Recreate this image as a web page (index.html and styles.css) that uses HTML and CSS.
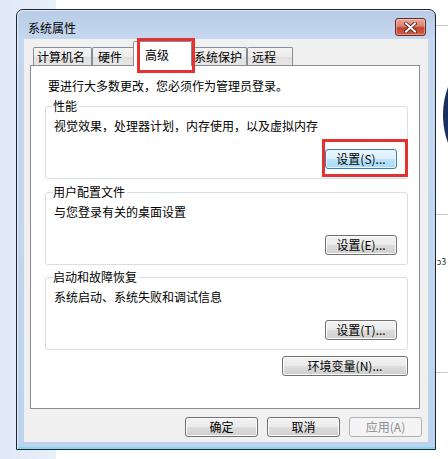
FILE: index.html
```html
<!DOCTYPE html>
<html lang="zh-CN">
<head>
<meta charset="utf-8">
<title>系统属性</title>
<link rel="stylesheet" href="styles.css">
</head>
<body>
<div class="desktop">
  <div class="deco deco-circle"></div>
  <div class="deco deco-line line-a"></div>
  <div class="deco deco-line line-b"></div>
  <div class="deco deco-line line-c"></div>
  <div class="deco deco-text">ɔ3</div>

  <div class="window">
    <div class="titlebar">
      <span class="title">系统属性</span>
      <button class="close" aria-label="关闭">
        <svg width="13" height="11" viewBox="0 0 13 11">
          <path d="M2 1.5 L11 9.5 M11 1.5 L2 9.5" stroke="#4a1b16" stroke-width="3.6" stroke-linecap="square"/>
          <path d="M2 1.5 L11 9.5 M11 1.5 L2 9.5" stroke="#ffffff" stroke-width="2" stroke-linecap="square"/>
        </svg>
      </button>
    </div>
    <div class="client">
      <div class="tabs">
        <div class="tab t1">计算机名</div>
        <div class="tab t2">硬件</div>
        <div class="tab sel">高级<span class="mark mark-tab"></span></div>
        <div class="tab t4">系统保护</div>
        <div class="tab t5">远程</div>
      </div>
      <div class="panel">
        <p class="note">要进行大多数更改，您必须作为管理员登录。</p>
        <fieldset class="group g1">
          <legend>性能</legend>
          <p class="desc">视觉效果，处理器计划，内存使用，以及虚拟内存</p>
          <div class="row"><button class="btn focus">设置(S)...<span class="mark mark-btn"></span></button></div>
        </fieldset>
        <fieldset class="group g2">
          <legend>用户配置文件</legend>
          <p class="desc">与您登录有关的桌面设置</p>
          <div class="row"><button class="btn">设置(E)...</button></div>
        </fieldset>
        <fieldset class="group g3">
          <legend>启动和故障恢复</legend>
          <p class="desc">系统启动、系统失败和调试信息</p>
          <div class="row"><button class="btn">设置(T)...</button></div>
        </fieldset>
        <div class="row env-row"><button class="btn env">环境变量(N)...</button></div>
      </div>
      <div class="footer">
        <button class="btn dlg">确定</button>
        <button class="btn dlg">取消</button>
        <button class="btn dlg disabled" disabled>应用(A)</button>
      </div>
    </div>
  </div>
</div>
</body>
</html>
```
FILE: styles.css
```css
* { box-sizing: border-box; }
html, body {
  margin: 0;
  padding: 0;
  width: 448px;
  height: 459px;
  overflow: hidden;
}
body {
  font-family: "Noto Sans CJK SC", "Noto Sans", sans-serif;
  font-size: 12px;
  color: #000;
  background: linear-gradient(90deg, #dfe9f7 0, #e8eff9 56px, #ffffff 56px);
}
.desktop {
  position: relative;
  width: 448px;
  height: 459px;
  padding: 9px 0 0 16px;
}
.deco { position: absolute; }
.deco-circle {
  left: 440px;
  top: 84px;
  width: 8px;
  height: 62px;
  background: radial-gradient(circle at 84px 31px, #1c2f63 0, #1c2f63 80.5px, rgba(28, 47, 99, 0) 81.5px);
}
.deco-line { left: 436px; width: 12px; height: 1px; background: #c9c9c9; }
.line-a { top: 25px; }
.line-b { top: 214px; }
.line-c { top: 372px; }
.deco-text {
  left: 437px;
  top: 256px;
  width: 11px;
  overflow: hidden;
  font-size: 9px;
  line-height: 12px;
  color: #333;
  white-space: nowrap;
}

.window {
  position: relative;
  width: 420px;
  height: 441px;
  border: 1px solid #1d2733;
  border-radius: 7px 7px 0 0;
  padding: 0 7px 0 7px;
  background: linear-gradient(180deg, #b8cce6 0, #c6d8ef 30px, #c2d6ee 60%, #bdd3ed calc(100% - 2px), #84d7f2 calc(100% - 2px));
  box-shadow: inset 1px 1px 0 #e4eefa;
}
.titlebar {
  height: 29px;
  display: flex;
  align-items: flex-start;
  justify-content: space-between;
}
.title {
  margin: 10px 0 0 4px;
  line-height: 16px;
  color: #000;
}
.close {
  margin: 8px 2px 0 0;
  width: 31px;
  height: 18px;
  padding: 0;
  border: 1px solid #6a2a22;
  border-radius: 3px;
  background: linear-gradient(180deg, #e8aa9c 0, #d98170 45%, #c3442f 55%, #d0604a 100%);
  box-shadow: inset 0 0 0 1px rgba(255, 220, 210, 0.45);
  display: flex;
  align-items: center;
  justify-content: center;
}
.close svg { display: block; }

.client {
  height: 403px;
  background: #f0f0f0;
  padding: 8px 0 0 6px;
}
.tabs {
  display: flex;
  align-items: flex-end;
  height: 18px;
  padding-left: 3px;
}
.tab {
  height: 18px;
  line-height: 16px;
  padding-top: 1px;
  border: 1px solid #898c95;
  border-bottom: none;
  border-radius: 2px 2px 0 0;
  background: linear-gradient(180deg, #f4f4f4 0, #ececec 50%, #dfdfdf 50%, #e6e6e6 100%);
  white-space: nowrap;
}
.t1 { width: 59px; padding-left: 3px; }
.t2 { width: 43px; padding-left: 5px; }
.sel {
  position: relative;
  z-index: 2;
  width: 59px;
  height: 25px;
  margin: 0 -2px -1px -2px;
  padding-left: 11px;
  padding-top: 5px;
  background: #ffffff;
}
.t4 { width: 57px; padding-left: 3px; }
.t5 { width: 46px; padding-left: 4px; }

.mark {
  position: absolute;
  border: 3px solid #e5312f;
  pointer-events: none;
}
.mark-tab { left: 3px; top: -4px; width: 58px; height: 35px; }
.mark-btn { left: -4px; top: -11px; width: 86px; height: 38px; }

.panel {
  position: relative;
  width: 390px;
  height: 344px;
  border: 1px solid #898c95;
  background: #ffffff;
  padding: 12px 0 0 0;
}
.note {
  margin: 0 0 5px 17px;
  line-height: 16px;
}
.group {
  margin: 0 11px 6px 14px;
  padding: 5px 8px 9px 8px;
  border: 1px solid #d5dfe5;
  border-radius: 3px;
  min-width: 0;
}
.g2 { margin-bottom: 5px; }
.group legend {
  padding: 0 2px 0 0;
  margin-left: -1px;
  line-height: 14px;
}
.desc {
  margin: 0;
  line-height: 16px;
}
.row {
  display: flex;
  justify-content: flex-end;
  margin-top: 15px;
}
.group .row { padding-right: 2px; }

.btn {
  position: relative;
  height: 20px;
  width: 72px;
  padding: 0;
  font-family: "Noto Sans CJK SC", "Noto Sans", sans-serif;
  font-size: 12px;
  line-height: 16px;
  color: #000;
  border: 1px solid #707070;
  border-radius: 3px;
  background: linear-gradient(180deg, #f2f2f2 0, #ebebeb 50%, #dddddd 50%, #cfcfcf 100%);
  box-shadow: inset 0 0 0 1px #fcfcfc;
}
.btn.focus {
  border-color: #3c7fb1;
  background: linear-gradient(180deg, #eaf6fd 0, #d9f0fc 50%, #bee6fd 50%, #a7d9f5 100%);
  box-shadow: inset 0 0 0 1px #e6f4fc;
}
.env-row {
  margin-top: 0;
  padding-right: 11px;
}
.env { width: 126px; }

.footer {
  display: flex;
  justify-content: flex-end;
  gap: 9px;
  margin-top: 8px;
  padding-right: 6px;
}
.dlg { width: 73px; }
.btn.disabled {
  color: #8a8a8a;
  border-color: #adb2b5;
  background: #f4f4f4;
  box-shadow: none;
}
```
